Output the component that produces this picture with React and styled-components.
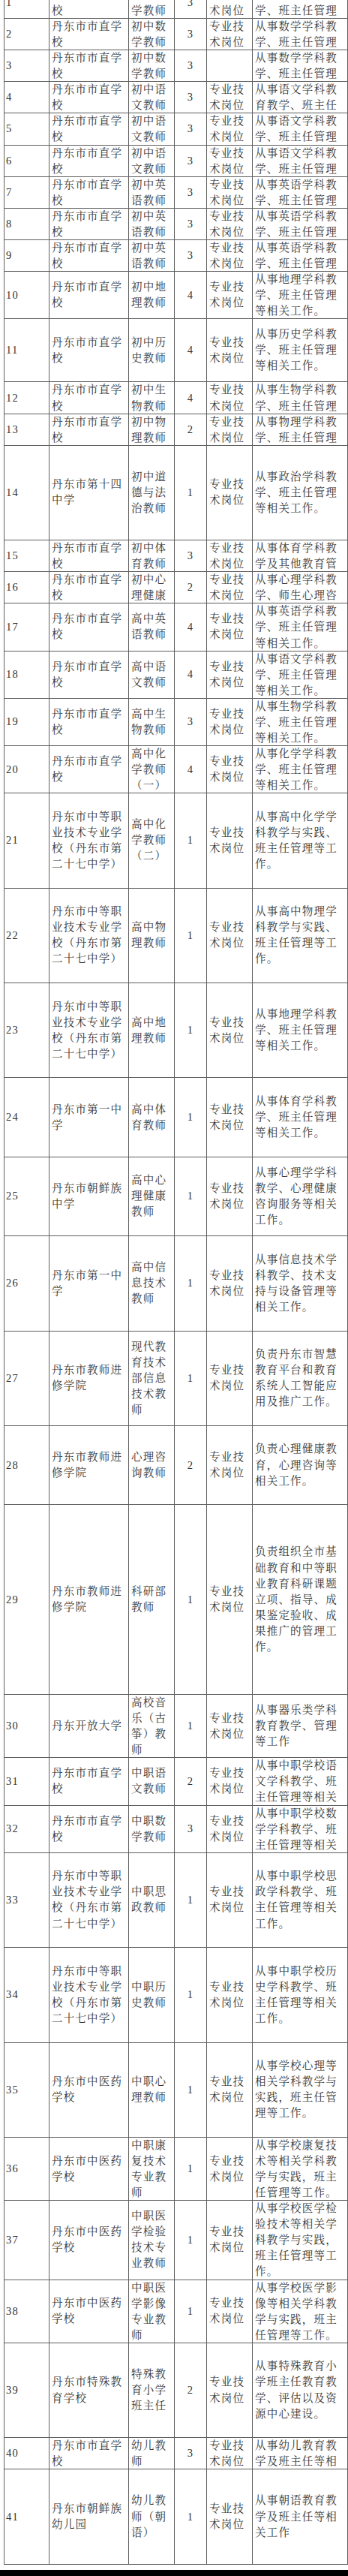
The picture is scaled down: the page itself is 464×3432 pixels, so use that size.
import React from 'react';
import styled, { createGlobalStyle } from 'styled-components';

const LINE = 21.07;

const GlobalStyle = createGlobalStyle`
    html, body {
        margin: 0;
        padding: 0;
        background: #ffffff;
    }
`;

const Page = styled.div`
    width: 464px;
    height: 3432px;
    overflow: hidden;
    display: flex;
    flex-direction: column;
    background: #ffffff;
    font-family: "Liberation Serif", "Noto Serif CJK SC", "Noto Sans CJK SC", serif;
    font-size: 14.5px;
    letter-spacing: 1.2px;
    color: #333333;
`;

const Sheet = styled.div`
    margin-top: -17.14px;
    margin-left: 5px;
    border-left: 1px solid #5e5e5e;
`;

const Row = styled.div`
    display: grid;
    grid-template-columns: 60px 106px 61px 43px 61px 127px;
    height: ${props => props.$lines * LINE}px;
    box-sizing: border-box;
    border-bottom: 1px solid #5e5e5e;
`;

const Cell = styled.div`
    display: flex;
    flex-direction: column;
    overflow: hidden;
    padding: 0 ${props => (props.$center ? 0 : 3)}px 0 ${props => (props.$center ? 0 : props.$pad || 3)}px;
    border-right: 1px solid #5e5e5e;
    text-align: ${props => (props.$center ? 'center' : 'left')};
`;

const Text = styled.div`
    margin: auto 0;
    line-height: ${LINE}px;
    word-break: break-all;
`;

const Footer = styled.div`
    flex: 1;
    margin-top: 7px;
    background: #000000;
`;

// 表格截图里被行高截掉的部分不再列出，只保留可见的文字
const rows = [
    [1, '丹东市市直学校', '初中数学教师', '3', '专业技术岗位', '从事数学学科教学、班主任管理', 2],
    [2, '丹东市市直学校', '初中数学教师', '3', '专业技术岗位', '从事数学学科教学、班主任管理', 2],
    [3, '丹东市市直学校', '初中数学教师', '3', '', '从事数学学科教学、班主任管理', 2],
    [4, '丹东市市直学校', '初中语文教师', '3', '专业技术岗位', '从事语文学科教育教学、班主任', 2],
    [5, '丹东市市直学校', '初中语文教师', '3', '专业技术岗位', '从事语文学科教学、班主任管理', 2],
    [6, '丹东市市直学校', '初中语文教师', '3', '专业技术岗位', '从事语文学科教学、班主任管理', 2],
    [7, '丹东市市直学校', '初中英语教师', '3', '专业技术岗位', '从事英语学科教学、班主任管理', 2],
    [8, '丹东市市直学校', '初中英语教师', '3', '专业技术岗位', '从事英语学科教学、班主任管理', 2],
    [9, '丹东市市直学校', '初中英语教师', '3', '专业技术岗位', '从事英语学科教学、班主任管理', 2],
    [10, '丹东市市直学校', '初中地理教师', '4', '专业技术岗位', '从事地理学科教学、班主任管理等相关工作。', 3],
    [11, '丹东市市直学校', '初中历史教师', '4', '专业技术岗位', '从事历史学科教学、班主任管理等相关工作。', 4],
    [12, '丹东市市直学校', '初中生物教师', '4', '专业技术岗位', '从事生物学科教学、班主任管理', 2],
    [13, '丹东市市直学校', '初中物理教师', '2', '专业技术岗位', '从事物理学科教学、班主任管理', 2],
    [14, '丹东市第十四中学', '初中道德与法治教师', '1', '专业技术岗位', '从事政治学科教学、班主任管理等相关工作。', 6],
    [15, '丹东市市直学校', '初中体育教师', '3', '专业技术岗位', '从事体育学科教学及其他教育管', 2],
    [16, '丹东市市直学校', '初中心理健康', '2', '专业技术岗位', '从事心理学科教学、师生心理咨', 2],
    [17, '丹东市市直学校', '高中英语教师', '4', '专业技术岗位', '从事英语学科教学、班主任管理等相关工作。', 3],
    [18, '丹东市市直学校', '高中语文教师', '4', '专业技术岗位', '从事语文学科教学、班主任管理等相关工作。', 3],
    [19, '丹东市市直学校', '高中生物教师', '3', '专业技术岗位', '从事生物学科教学、班主任管理等相关工作。', 3],
    [20, '丹东市市直学校', '高中化学教师（一）', '4', '专业技术岗位', '从事化学学科教学、班主任管理等相关工作。', 3],
    [21, '丹东市中等职业技术专业学校（丹东市第二十七中学）', '高中化学教师（二）', '1', '专业技术岗位', '从事高中化学学科教学与实践、班主任管理等工作。', 6],
    [22, '丹东市中等职业技术专业学校（丹东市第二十七中学）', '高中物理教师', '1', '专业技术岗位', '从事高中物理学科教学与实践、班主任管理等工作。', 6],
    [23, '丹东市中等职业技术专业学校（丹东市第二十七中学）', '高中地理教师', '1', '专业技术岗位', '从事地理学科教学、班主任管理等相关工作。', 6],
    [24, '丹东市第一中学', '高中体育教师', '1', '专业技术岗位', '从事体育学科教学、班主任管理等相关工作。', 5],
    [25, '丹东市朝鲜族中学', '高中心理健康教师', '1', '专业技术岗位', '从事心理学学科教学、心理健康咨询服务等相关工作。', 5],
    [26, '丹东市第一中学', '高中信息技术教师', '1', '专业技术岗位', '从事信息技术学科教学、技术支持与设备管理等相关工作。', 6],
    [27, '丹东市教师进修学院', '现代教育技术部信息技术教师', '1', '专业技术岗位', '负责丹东市智慧教育平台和教育系统人工智能应用及推广工作。', 6],
    [28, '丹东市教师进修学院', '心理咨询教师', '2', '专业技术岗位', '负责心理健康教育，心理咨询等相关工作。', 5],
    [29, '丹东市教师进修学院', '科研部教师', '1', '专业技术岗位', '负责组织全市基础教育和中等职业教育科研课题立项、指导、成果鉴定验收、成果推广的管理工作。', 12],
    [30, '丹东开放大学', '高校音乐（古筝）教师', '1', '专业技术岗位', '从事器乐类学科教育教学、管理等工作', 4],
    [31, '丹东市市直学校', '中职语文教师', '2', '专业技术岗位', '从事中职学校语文学科教学、班主任管理等相关', 3],
    [32, '丹东市市直学校', '中职数学教师', '3', '专业技术岗位', '从事中职学校数学学科教学、班主任管理等相关', 3],
    [33, '丹东市中等职业技术专业学校（丹东市第二十七中学）', '中职思政教师', '1', '专业技术岗位', '从事中职学校思政学科教学、班主任管理等相关工作。', 6],
    [34, '丹东市中等职业技术专业学校（丹东市第二十七中学）', '中职历史教师', '1', '专业技术岗位', '从事中职学校历史学科教学、班主任管理等相关工作。', 6],
    [35, '丹东市中医药学校', '中职心理教师', '1', '专业技术岗位', '从事学校心理等相关学科教学与实践，班主任管理等工作。', 6],
    [36, '丹东市中医药学校', '中职康复技术专业教师', '1', '专业技术岗位', '从事学校康复技术等相关学科教学与实践，班主任管理等工作。', 4],
    [37, '丹东市中医药学校', '中职医学检验技术专业教师', '1', '专业技术岗位', '从事学校医学检验技术等相关学科教学与实践，班主任管理等工作。', 5],
    [38, '丹东市中医药学校', '中职医学影像专业教师', '1', '专业技术岗位', '从事学校医学影像等相关学科教学与实践，班主任管理等工作。', 4],
    [39, '丹东市特殊教育学校', '特殊教育小学班主任', '2', '专业技术岗位', '从事特殊教育小学班主任教育教学、评估以及资源中心建设。', 6],
    [40, '丹东市市直学校', '幼儿教师', '3', '专业技术岗位', '从事幼儿教育教学及班主任等相', 2],
    [41, '丹东市朝鲜族幼儿园', '幼儿教师（朝语）', '1', '专业技术岗位', '从事朝语教育教学及班主任等相关工作', 6],
];

export default function App() {
    return (
        <>
            <GlobalStyle />
            <Page>
                <Sheet>
                    {rows.map(([no, unit, post, count, kind, duty, lines]) => (
                        <Row key={no} $lines={lines}>
                            <Cell $pad={2}><Text>{no}</Text></Cell>
                            <Cell><Text>{unit}</Text></Cell>
                            <Cell><Text>{post}</Text></Cell>
                            <Cell $center><Text>{count}</Text></Cell>
                            <Cell><Text>{kind}</Text></Cell>
                            <Cell><Text>{duty}</Text></Cell>
                        </Row>
                    ))}
                </Sheet>
                <Footer />
            </Page>
        </>
    );
}
